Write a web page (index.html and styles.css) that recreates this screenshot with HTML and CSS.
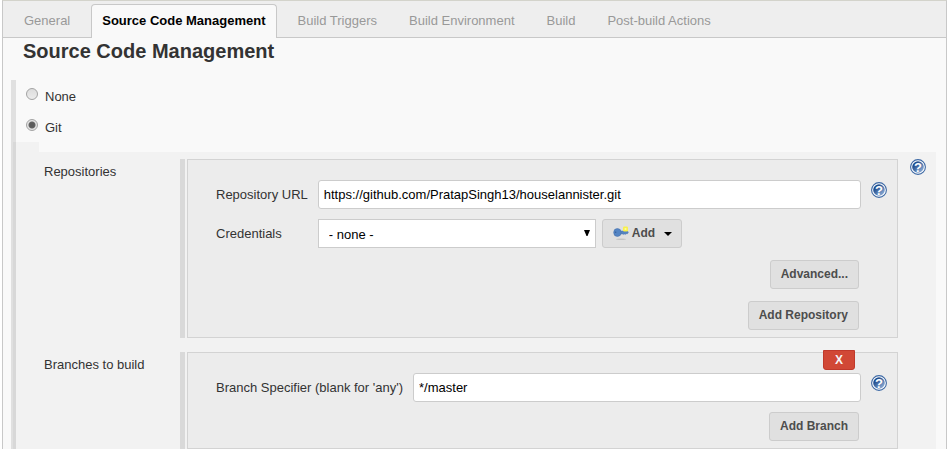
FILE: index.html
```html
<!DOCTYPE html>
<html lang="en">
<head>
<meta charset="utf-8">
<title>Source Code Management</title>
<link rel="stylesheet" href="styles.css">
</head>
<body>
<svg class="defs" width="0" height="0" aria-hidden="true">
  <defs>
    <linearGradient id="help-fill" x1="0" y1="0" x2="1" y2="1">
      <stop offset="0.25" stop-color="#1f4c8d"/>
      <stop offset="1" stop-color="#a3c0e4"/>
    </linearGradient>
    <symbol id="help" viewBox="0 0 16 16">
      <circle cx="8" cy="8" r="7.4" fill="#fff" stroke="#3c68a4" stroke-width="1.1"/>
      <circle cx="8" cy="8" r="5.8" fill="url(#help-fill)"/>
      <text x="8" y="12.500" text-anchor="middle" font-family="Liberation Sans, sans-serif" font-size="13" font-weight="700" fill="#fff">?</text>
    </symbol>
  </defs>
</svg>
<main class="config">
  <nav class="tabs">
    <a class="tab" href="#general">General</a>
    <a class="tab tab-active" href="#scm">Source Code Management</a>
    <a class="tab" href="#triggers">Build Triggers</a>
    <a class="tab" href="#environment">Build Environment</a>
    <a class="tab" href="#build">Build</a>
    <a class="tab" href="#post-build">Post-build Actions</a>
  </nav>
  <h1 class="title">Source Code Management</h1>
  <form class="scm" id="scm">
    <div class="choice"><input class="radio" type="radio" name="scm" id="scm-none"><label for="scm-none">None</label></div>
    <div class="choice"><input class="radio" type="radio" name="scm" id="scm-git" checked><label for="scm-git">Git</label></div>
    <div class="options">
      <div class="options-lead"></div>
      <div class="options-body">
        <section class="setting">
          <h2 class="setting-name">Repositories</h2>
          <div class="group">
            <div class="fields">
              <label class="field-name" for="url">Repository URL</label>
              <input class="text" type="text" id="url" value="https://github.com/PratapSingh13/houselannister.git">
              <a class="help" href="#help-url" aria-label="Help"><svg width="16" height="16"><use href="#help"/></svg></a>
              <label class="field-name" for="credentials">Credentials</label>
              <div class="credentials">
                <span class="select-wrap">
                  <select class="select" id="credentials"><option>- none -</option></select>
                  <svg class="select-arrow" width="6" height="6" viewBox="0 0 6 6" aria-hidden="true"><path d="M0 0h6L3.5 6h-1z" fill="#000"/></svg>
                </span>
                <button class="button button-add" type="button">
                  <svg width="16" height="16" viewBox="0 0 16 16" aria-hidden="true">
                    <ellipse cx="8" cy="14.200" rx="5" ry=".8" fill="#c4c4c4"/>
                    <path d="M6 6h8.500l.8 1.500-.8 1.200h-1.500l-.6.8-.8-.6-.8.6L10 9H6z" fill="#5584c1" stroke="#4a75b0" stroke-width=".5"/>
                    <ellipse cx="4.400" cy="7.500" rx="3.700" ry="3.900" fill="#5485c4" stroke="#4974ae" stroke-width=".6"/>
                    <circle cx="2.600" cy="7.300" r=".8" fill="#3a629b"/>
                    <rect x="10" y="1.500" width="5" height="5" rx="1.300" fill="#f8f04c"/>
                    <circle cx="12.500" cy="4" r="1.100" fill="#fffc9c"/>
                  </svg>
                  <span>Add</span>
                  <svg class="caret" width="8" height="4" viewBox="0 0 8 4" aria-hidden="true"><path d="M0 0h8L4 4z" fill="#000"/></svg>
                </button>
              </div>
            </div>
            <div class="actions">
              <button class="button" type="button">Advanced...</button>
              <button class="button" type="button">Add Repository</button>
            </div>
          </div>
          <a class="setting-help" href="#help-repositories" aria-label="Help"><svg width="16" height="16"><use href="#help"/></svg></a>
        </section>
        <section class="setting">
          <h2 class="setting-name">Branches to build</h2>
          <div class="group">
            <button class="delete" type="button" aria-label="Delete branch">X</button>
            <div class="fields">
              <label class="field-name" for="branch">Branch Specifier (blank for 'any')</label>
              <input class="text" type="text" id="branch" value="*/master">
              <a class="help" href="#help-branch" aria-label="Help"><svg width="16" height="16"><use href="#help"/></svg></a>
            </div>
            <div class="actions">
              <button class="button" type="button">Add Branch</button>
            </div>
          </div>
        </section>
      </div>
    </div>
  </form>
</main>
</body>
</html>
```

FILE: styles.css
```css
* {
  box-sizing: border-box;
}

body {
  margin: 0;
  background: #fff;
  color: #333;
  font: 13px/18px "Liberation Sans", Arial, sans-serif;
}

.defs {
  position: absolute;
}

.config {
  margin: 0 1px 0 2px;
  border: 1px solid #c8c8c8;
  border-top-color: #d3d3cb;
  border-bottom: 0;
  background: #f9f9f9;
}

.tabs {
  display: flex;
  gap: 10px;
  height: 37px;
  padding: 3px 10px 0;
  border-bottom: 1px solid #c8c8c8;
  background: #eee;
}

.tab {
  height: 34px;
  padding: 7px 10px 0;
  border: 1px solid transparent;
  border-bottom: 0;
  border-radius: 4px 4px 0 0;
  color: #999;
  text-decoration: none;
  white-space: nowrap;
}

.tab-active {
  border-color: #c8c8c8;
  background: #f9f9f9;
  color: #000;
  font-weight: 700;
}

.title {
  margin: 0 20px;
  font-size: 20px;
  line-height: 26px;
}

.scm {
  margin: 16px 10px 0 8px;
  border-left: 5px solid #e0e0e0;
}

.choice {
  display: flex;
  gap: 7px;
  height: 31px;
  padding: 8px 0 0 10px;
}

.radio {
  appearance: none;
  width: 12px;
  height: 12px;
  margin: 0;
  border: 1px solid #a3a3a3;
  border-radius: 50%;
  background: linear-gradient(#dcdcdc, #ebebeb);
}

.radio:checked {
  background: radial-gradient(circle, #5c5c5c 0 2px, #666 3px, #e4e4e4 4px);
}

.options {
  margin-left: -3px;
  border-left: 3px solid #d8d8d8;
}

.options-lead {
  width: 23px;
  height: 10px;
  background: #f2f2f2;
}

.options-body {
  display: flex;
  flex-direction: column;
  gap: 14px;
  padding-top: 7px;
  background: #f2f2f2;
}

.setting {
  display: grid;
  grid-template-columns: 136px 1fr 16px;
  column-gap: 12px;
  padding: 0 10px 0 28px;
}

.setting-name {
  margin: 4px 0 0;
  font-size: 13px;
  font-weight: 400;
}

.group {
  position: relative;
  margin-left: -5px;
  padding: 20px 10px 7px 28px;
  border: 1px solid #d3d3d3;
  background: #ececec;
}

.group::before {
  content: "";
  position: absolute;
  top: -1px;
  bottom: -1px;
  left: -8px;
  width: 5px;
  background: #d9d9d9;
}

.help,
.setting-help {
  height: 16px;
}

.help {
  margin-top: 2px;
}

.help svg,
.setting-help svg {
  display: block;
}

.fields {
  display: grid;
  grid-template-columns: auto 1fr 16px;
  gap: 10px;
}

.field-name {
  padding-top: 6px;
  white-space: nowrap;
}

.text {
  width: 100%;
  height: 29px;
  padding: 0 5px;
  border: 1px solid #ccc;
  border-radius: 3px;
  background: #fff;
  color: #000;
  font: inherit;
}

.credentials {
  display: flex;
  gap: 6px;
}

.select-wrap {
  position: relative;
}

.select {
  appearance: none;
  width: 278px;
  height: 29px;
  padding: 2px 10px 0;
  border: 1px solid #ccc;
  border-radius: 0;
  background: #fff;
  color: #000;
  font: inherit;
}

.select-arrow {
  position: absolute;
  top: 11px;
  right: 6px;
  pointer-events: none;
}

.button {
  height: 29px;
  padding: 0 10px 2px;
  border: 1px solid #ccc;
  border-radius: 3px;
  background: #e0e0e0;
  color: #4d4d4d;
  font: 700 12px/18px "Liberation Sans", Arial, sans-serif;
}

.button-add {
  display: flex;
  align-items: center;
  gap: 3px;
  padding: 0 9px 2px 10px;
}

.caret {
  margin: 2px 0 0 6px;
}

.actions {
  display: flex;
  flex-direction: column;
  align-items: flex-end;
  gap: 12px;
  margin-right: 28px;
  padding-top: 12px;
}

.setting + .setting .actions {
  padding-top: 10px;
}

.delete {
  position: absolute;
  top: -3px;
  right: 42px;
  width: 32px;
  height: 20px;
  padding: 0;
  border: 1px solid #c0392b;
  border-radius: 0 0 3px 3px;
  background: #d14836;
  color: #f5f5f5;
  font: 700 12px/16px "Liberation Sans", Arial, sans-serif;
}
```
